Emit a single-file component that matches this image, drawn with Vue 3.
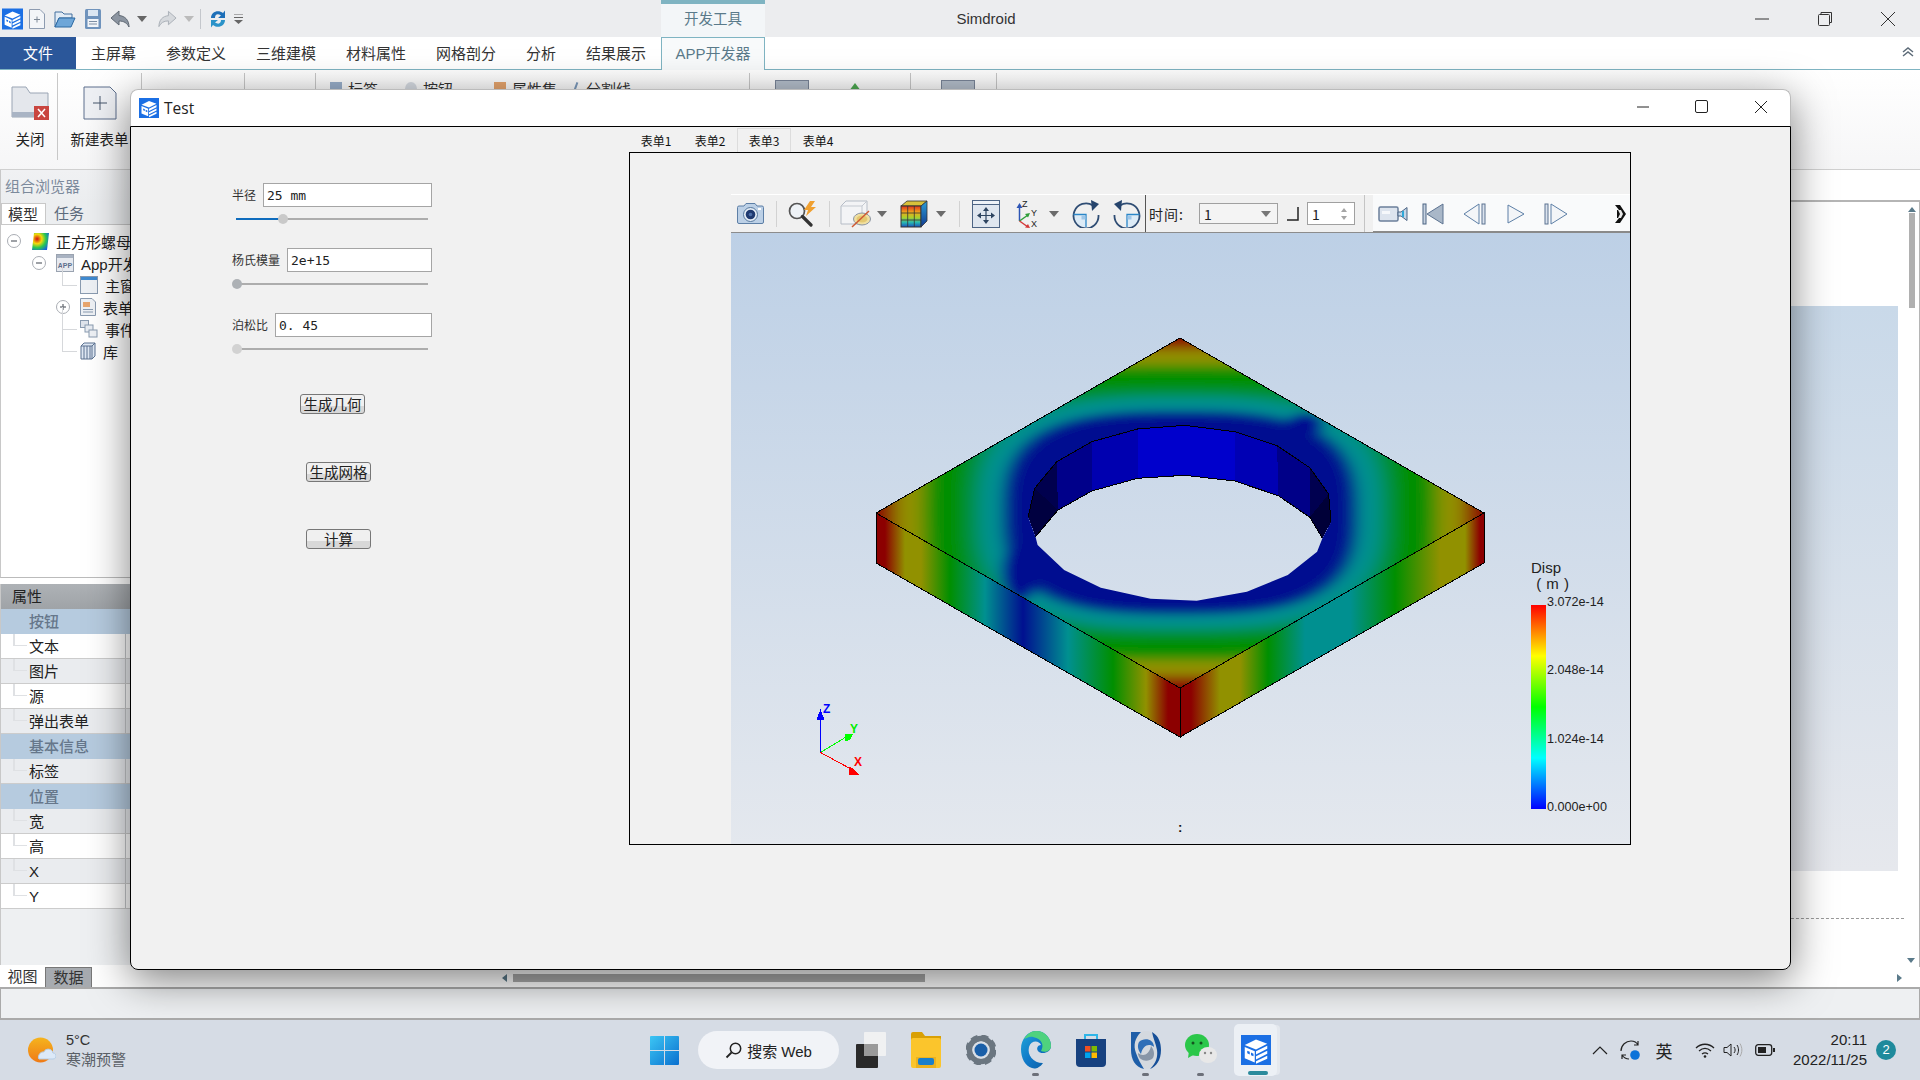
<template>
  <div class="desktop">
    <svg class="defs" width="0" height="0">
      <symbol id="logo" viewBox="0 0 24 24">
        <rect width="24" height="24" fill="#1b6fe4" />
        <path d="M3 8 12 3.500 21 7 12 11.500Z M3 9.500 11 13V22L3 18.500Z M12 13 21 8.500V11L12 15.500Z M12 17 21 12.500V15L12 19.500Z M12 21 21 16.500V19L12 23Z" fill="#fff" />
        <path d="M5 12.500 7 13.400V15.500L5 14.600Z M8 14 10 15V17L8 16.100Z" fill="#1b6fe4" />
      </symbol>
    </svg>

    <!-- title bar -->
    <div class="titlebar">
      <div class="qat">
        <svg class="q-logo" width="21" height="22"><use href="#logo" /></svg>
        <svg class="q-new" width="18" height="22" viewBox="0 0 18 22"><path d="M1.500 1.500H12L16.500 6V20.500H1.500Z" fill="#f3f5f8" stroke="#8d9bb0" /><path d="M9 8.500V14.500M6 11.500H12" stroke="#7d8896" /></svg>
        <svg class="q-open" width="22" height="20" viewBox="0 0 22 20"><path d="M1 3H8L10 5H18V9H5L1 18Z" fill="#e1ebf5" stroke="#44709f" /><path d="M5 9H21L17 18H1Z" fill="#6ea6d8" stroke="#2c6aa3" /></svg>
        <svg class="q-save" width="18" height="22" viewBox="0 0 18 22"><rect x="1" y="1" width="16" height="20" rx="1.500" fill="#6f93bc" /><rect x="4" y="2" width="10" height="6" fill="#dbe6f2" /><rect x="3.500" y="11" width="11" height="8" fill="#f1f4f8" /><path d="M5 13.500H13M5 16H13" stroke="#7c8ea4" /></svg>
        <svg class="q-undo" width="21" height="20" viewBox="0 0 21 20"><path d="M9 2 1 9 9 16V12C14 12 17 14 19 18 19 11 15 7 9 6.500Z" fill="#8c95a1" stroke="#5f6873" /></svg>
        <svg class="q-drop" width="10" height="6" viewBox="0 0 10 6"><path d="M0 0H10L5 6Z" fill="#666" /></svg>
        <svg class="q-redo" width="20" height="20" viewBox="0 0 21 20"><path d="M12 2 20 9 12 16V12C7 12 4 14 2 18 2 11 6 7 12 6.500Z" fill="#d6d9dd" stroke="#a9afb6" /></svg>
        <svg class="q-drop2" width="10" height="6" viewBox="0 0 10 6"><path d="M0 0H10L5 6Z" fill="#bbb" /></svg>
        <i class="q-sep"></i>
        <svg class="q-sync" width="18" height="22" viewBox="0 0 18 22"><path d="M2 10C2 4 9 1 14 5L16 2.500V10H9L12 7.500C8 5 6 7 6 10Z" fill="#1d6fb8" /><path d="M16 12C16 18 9 21 4 17L2 19.500V12H9L6 14.500C10 17 12 15 12 12Z" fill="#2b93c9" /></svg>
        <svg class="q-more" width="9" height="10" viewBox="0 0 9 10"><path d="M0 0H9M0 3.500H9" stroke="#666" /><path d="M0 6H9L4.500 10Z" fill="#666" /></svg>
      </div>
      <div class="context-tab">开发工具</div>
      <div class="app-title">Simdroid</div>
      <div class="win-ctrl">
        <svg width="16" height="16" viewBox="0 0 16 16"><path d="M1 8H15" stroke="#333" /></svg>
        <svg width="16" height="16" viewBox="0 0 16 16"><path d="M4 3V1.500H14.500V11.500H12.500" fill="none" stroke="#333" /><rect x="1.500" y="3.500" width="11" height="11" rx="1" fill="#ecedef" stroke="#333" /></svg>
        <svg width="16" height="16" viewBox="0 0 16 16"><path d="M1 1 15 15M15 1 1 15" stroke="#333" /></svg>
      </div>
    </div>

    <!-- ribbon tabs -->
    <div class="tabbar">
      <div class="file-tab">文件</div>
      <div v-for="t in ribbonTabs" :key="t" class="rb-tab">{{ t }}</div>
      <div class="rb-tab active">APP开发器</div>
      <svg class="rb-collapse" width="12" height="10" viewBox="0 0 12 10"><path d="M1 5 6 1 11 5M1 9 6 5 11 9" fill="none" stroke="#5d6b78" stroke-width="1.500" /></svg>
    </div>

    <!-- ribbon -->
    <div class="ribbon">
      <div class="rb-group g-close">
        <svg width="38" height="34" viewBox="0 0 38 34"><path d="M1 1H15L19 7H37V31H1Z" fill="#e4e7ec" stroke="#9aa5b4" /><rect x="1" y="26" width="36" height="5" fill="#a9b4c4" /><rect x="23" y="20" width="15" height="14" fill="#c9453f" /><path d="M27 23 34 31M34 23 27 31" stroke="#fff" stroke-width="1.500" /></svg>
        <span>关闭</span>
      </div>
      <div class="rb-group g-new">
        <svg width="34" height="34" viewBox="0 0 34 34"><path d="M1 1H27L33 7V33H1Z" fill="#eef0f4" stroke="#5d6f8d" /><path d="M17 10V24M10 17H24" stroke="#44546a" /></svg>
        <span>新建表单</span>
      </div>
      <div class="rb-group g-a"></div>
      <div class="rb-group g-b"></div>
      <div class="rb-group g-small">
        <span class="s-item si-1"><i class="s-icon c1"></i>标签</span>
        <span class="s-item si-2"><i class="s-icon c2"></i>按钮</span>
        <span class="s-item si-3"><i class="s-icon c3"></i>属性集</span>
        <span class="s-item si-4"><i class="s-icon c4"></i>分割线</span>
      </div>
      <div class="rb-group g-c"><i class="big-icon"></i><i class="green-icon"></i></div>
      <div class="rb-group g-d"><i class="big-icon"></i></div>
    </div>

    <!-- main area behind the dialog -->
    <div class="main">
      <div class="side">
        <div class="browser">
          <div class="browser-title">组合浏览器</div>
          <div class="browser-tabs">
            <span class="b-tab on">模型</span>
            <span class="b-tab">任务</span>
          </div>
          <div class="tree">
            <div v-for="r in treeRows" :key="r.label" class="tree-row" :class="r.branch" :style="{ paddingLeft: r.indent + 'px' }">
              <svg v-if="r.toggle" class="toggle" width="14" height="14" viewBox="0 0 14 14">
                <circle cx="7" cy="7" r="6.500" fill="#fff" stroke="#a9adb3" />
                <path d="M4 7H10" stroke="#6a6f76" stroke-width="1.300" />
                <path v-if="r.toggle === 'plus'" d="M7 4V10" stroke="#6a6f76" stroke-width="1.300" />
              </svg>
              <svg v-if="r.icon === 'nut'" width="18" height="18" viewBox="0 0 18 18">
                <defs><radialGradient id="nutfill" cx=".3" cy=".35" r=".8"><stop offset="0" stop-color="#d21010" /><stop offset=".35" stop-color="#f5d90a" /><stop offset=".65" stop-color="#28c850" /><stop offset="1" stop-color="#1560e0" /></radialGradient></defs>
                <path d="M3 1H18L16 18H1Z" fill="url(#nutfill)" />
              </svg>
              <svg v-if="r.icon === 'app'" width="18" height="18" viewBox="0 0 18 18"><rect x=".5" y=".5" width="17" height="17" fill="#e7eaf0" stroke="#9aa3b0" /><rect x="1" y="1" width="16" height="3" fill="#a9b3c2" /><text x="9" y="14" text-anchor="middle" class="app-txt">APP</text></svg>
              <svg v-if="r.icon === 'win'" width="18" height="18" viewBox="0 0 18 18"><rect x=".5" y=".5" width="17" height="17" fill="#eef1f5" stroke="#8a9bb0" /><rect x="1" y="1" width="16" height="3" fill="#3f8ad0" /></svg>
              <svg v-if="r.icon === 'form'" width="16" height="18" viewBox="0 0 16 18"><path d="M.5.5H12L15.500 4V17.500H.500Z" fill="#eef1f5" stroke="#8a9bb0" /><rect x="3" y="4" width="7" height="5" fill="#e8a66e" /><path d="M3 11.500H13M3 14H13" stroke="#8a9bb0" /></svg>
              <svg v-if="r.icon === 'event'" width="18" height="18" viewBox="0 0 18 18"><rect x=".5" y=".5" width="8" height="7" fill="#dfe4ec" stroke="#8a9bb0" /><rect x="5" y="5" width="8" height="7" fill="#e8ecf2" stroke="#8a9bb0" /><rect x="9" y="10" width="8" height="7" fill="#eef1f5" stroke="#8a9bb0" /></svg>
              <svg v-if="r.icon === 'lib'" width="16" height="18" viewBox="0 0 16 18"><path d="M1 4 4 1H15V14L12 17H1Z" fill="#dfe8f4" stroke="#5d7391" /><path d="M4 4V17M7 4V17M10 4V17M1 4H12V17M12 4 15 1" fill="none" stroke="#5d7391" /></svg>
              <span class="tree-label">{{ r.label }}</span>
            </div>
          </div>
        </div>
        <div class="props">
          <div class="props-head">属性</div>
          <div v-for="p in propRows" :key="p.label" class="prop-row" :class="p.kind">
            <span>{{ p.label }}</span>
          </div>
        </div>
      </div>
      <div class="canvas">
        <div class="doc">
          <div class="plot"></div>
          <div class="dash"></div>
        </div>
        <div class="v-scroll">
          <i class="arrow-up"></i>
          <i class="v-thumb"></i>
          <i class="arrow-down"></i>
        </div>
      </div>
    </div>

    <div class="bottom-tabs">
      <span class="bt">视图</span>
      <span class="bt off">数据</span>
      <div class="h-scroll">
        <i class="arrow-left"></i>
        <i class="h-thumb"></i>
        <i class="arrow-right"></i>
      </div>
    </div>
    <div class="statusbar"></div>

    <!-- windows taskbar -->
    <div class="taskbar">
      <div class="weather">
        <svg width="28" height="26" viewBox="0 0 28 26">
          <defs><linearGradient id="sun" x1="0" y1="0" x2="0" y2="1"><stop offset="0" stop-color="#f5b41e" /><stop offset="1" stop-color="#ef7a16" /></linearGradient></defs>
          <circle cx="12.500" cy="13" r="12.500" fill="url(#sun)" />
          <path d="M11 22H25C29 22 29 16 25 16 24 11 17 11 16 15 12 14 9 20 11 22Z" fill="#dce9f8" stroke="#b6cde6" />
        </svg>
        <div class="w-text"><div>5°C</div><div class="w-sub">寒潮预警</div></div>
      </div>
      <svg class="start" width="29" height="29" viewBox="0 0 29 29">
        <defs><linearGradient id="winb" x1="0" y1="0" x2="1" y2="1"><stop offset="0" stop-color="#3cc6f4" /><stop offset="1" stop-color="#0a70cf" /></linearGradient></defs>
        <path d="M0 1Q0 0 1 0H14V14H0ZM15 0H28Q29 0 29 1V14H15ZM0 15H14V29H1Q0 29 0 28ZM15 15H29V28Q29 29 28 29H15Z" fill="url(#winb)" />
      </svg>
      <div class="search">
        <svg width="17" height="17" viewBox="0 0 17 17"><circle cx="10.500" cy="6.500" r="5.200" fill="none" stroke="#222" stroke-width="1.500" /><path d="M6.500 10.500 1.500 15.500" stroke="#222" stroke-width="1.800" /></svg>
        <span>搜索 Web</span>
      </div>
      <div class="apps">
        <div class="app">
          <svg width="30" height="36" viewBox="0 0 30 36"><rect x="0" y="12" width="22" height="24" rx="1" fill="#2a2a2a" /><rect x="8" y="0" width="22" height="24" rx="1" fill="#f4f4f4" opacity=".85" /><rect x="8" y="12" width="14" height="12" fill="#9a9a9a" /></svg>
        </div>
        <div class="app">
          <svg width="30" height="36" viewBox="0 0 30 36"><path d="M0 2Q0 0 2 0H11L14 4H30V8H0Z" fill="#d9a005" /><rect y="6" width="30" height="30" rx="2" fill="#fbc52c" /><rect x="5" y="25" width="20" height="11" fill="#ecb21f" /><rect x="7" y="26" width="16" height="7" rx="2" fill="#1a7fcb" /></svg>
        </div>
        <div class="app">
          <svg width="30" height="30" viewBox="0 0 30 30"><circle cx="15" cy="15" r="11.500" fill="none" stroke="#6b7680" stroke-width="5.500" /><circle cx="15" cy="15" r="14" fill="none" stroke="#6b7680" stroke-width="3" stroke-dasharray="7 4" /><circle cx="15" cy="15" r="6.500" fill="#1a5fa8" /><circle cx="15" cy="15" r="8" fill="none" stroke="#dde2e8" stroke-width="1" /></svg>
        </div>
        <div class="app dot">
          <svg width="30" height="38" viewBox="0 0 30 38">
            <defs><linearGradient id="edge" x1="0" y1="0" x2="1" y2="1"><stop offset="0" stop-color="#22a7d8" /><stop offset=".5" stop-color="#1079c8" /><stop offset="1" stop-color="#0c5aa0" /></linearGradient></defs>
            <path d="M15 0C25 0 30 8 30 15 30 22 20 24 17 20 15 17 17 14 20 14 18 9 10 9 8 16 6 24 12 32 22 32 18 38 13 38 11 37 4 35 0 27 0 18 0 8 7 0 15 0Z" fill="url(#edge)" />
            <path d="M15 0C25 0 30 8 30 15 30 20 24 22 20 20 23 15 22 8 12 6 8 5 5 8 3 8 6 3 10 0 15 0Z" fill="#4fd27e" />
          </svg>
        </div>
        <div class="app">
          <svg width="30" height="34" viewBox="0 0 30 34"><path d="M9 6V2H21V6" fill="none" stroke="#2fb5e8" stroke-width="2" /><path d="M0 6H30V30Q30 34 26 34H4Q0 34 0 30Z" fill="#17417f" /><rect x="9" y="13" width="5.500" height="5.500" fill="#f05022" /><rect x="15.500" y="13" width="5.500" height="5.500" fill="#7fba00" /><rect x="9" y="19.500" width="5.500" height="5.500" fill="#00a4ef" /><rect x="15.500" y="19.500" width="5.500" height="5.500" fill="#ffb900" /></svg>
        </div>
        <div class="app dot">
          <svg width="30" height="40" viewBox="0 0 30 40">
            <ellipse cx="15" cy="20" rx="15" ry="19" fill="#d4d9df" />
            <path d="M0 2H10C4 8 2 15 5 23 7 29 10 34 13 39 4 37 0 29 0 20Z" fill="#1e5ea8" />
            <path d="M21 2C28 6 30 13 30 20 30 30 25 37 19 39 25 33 27 27 26 20 25 14 22 8 21 2Z" fill="#164f98" />
            <path d="M8 12C13 7 23 9 23 17 18 13 12 15 10 24 7 20 6 16 8 12Z" fill="#2f6fb8" />
            <path d="M22 28C17 33 7 31 7 23 12 27 18 25 20 16 23 20 24 24 22 28Z" fill="#8896a8" />
          </svg>
        </div>
        <div class="app dot">
          <svg width="32" height="34" viewBox="0 0 32 34"><ellipse cx="12" cy="12" rx="12" ry="11" fill="#2bc74a" /><path d="M4 18 3 25 10 21Z" fill="#2bc74a" /><circle cx="8" cy="10" r="1.500" fill="#14531f" /><circle cx="16" cy="10" r="1.500" fill="#14531f" /><ellipse cx="23" cy="22" rx="9" ry="8" fill="#e8e8e8" /><circle cx="20" cy="20" r="1.200" fill="#888" /><circle cx="26" cy="20" r="1.200" fill="#888" /></svg>
        </div>
        <div class="app active">
          <svg width="30" height="40"><use href="#logo" /></svg>
        </div>
      </div>
      <div class="tray">
        <svg class="t30" width="16" height="9" viewBox="0 0 16 9"><path d="M1 8 8 1 15 8" fill="none" stroke="#222" stroke-width="1.200" /></svg>
        <svg class="t30" width="20" height="20" viewBox="0 0 20 20"><path d="M1 11C1 5 6 1 11 1 14 1 17 3 18 5M18 1V5H14M2 19V15H6M2 15C4 18 6 19 9 19" fill="none" stroke="#222" stroke-width="1.200" /><circle cx="15" cy="15" r="4.800" fill="#0b73d9" /></svg>
        <span class="ime">英</span>
        <svg class="wifi" width="20" height="15" viewBox="0 0 20 15"><path d="M1 5C6 0 14 0 19 5M4 8C8 4.500 12 4.500 16 8M7 11C9 9.500 11 9.500 13 11" fill="none" stroke="#222" stroke-width="1.300" /><circle cx="10" cy="13.500" r="1.300" fill="#222" /></svg>
        <svg class="vol" width="20" height="16" viewBox="0 0 20 16"><path d="M1 5.500H4L8 2V14L4 10.500H1Z" fill="none" stroke="#222" /><path d="M11 5C12.500 7 12.500 9 11 11M14 3C16 6 16 10 14 13" fill="none" stroke="#222" /><path d="M17 1.500C19.500 6 19.500 10 17 14.500" fill="none" stroke="#aaa" /></svg>
        <svg class="bat" width="20" height="12" viewBox="0 0 20 12"><rect x=".7" y=".7" width="16" height="10.600" rx="2.500" fill="none" stroke="#222" stroke-width="1.300" /><rect x="3" y="3" width="8" height="6" fill="#222" /><rect x="18" y="4" width="2" height="4" fill="#222" /></svg>
        <div class="clock"><div>20:11</div><div>2022/11/25</div></div>
        <span class="badge">2</span>
      </div>
    </div>

    <!-- the Test dialog, floating over the app -->
    <div class="dialog">
      <div class="dlg-title">
        <svg width="20" height="20"><use href="#logo" /></svg>
        <span class="dlg-name">Test</span>
        <div class="dlg-ctrl">
          <svg width="14" height="14" viewBox="0 0 14 14"><path d="M1 7H13" stroke="#222" /></svg>
          <svg width="14" height="14" viewBox="0 0 14 14"><rect x=".5" y=".5" width="12" height="12" rx="1.500" fill="none" stroke="#222" /></svg>
          <svg width="14" height="14" viewBox="0 0 14 14"><path d="M1 1 13 13M13 1 1 13" stroke="#222" /></svg>
        </div>
      </div>
      <div class="dlg-body">
        <div class="form">
          <div v-for="f in fields" :key="f.label" class="field">
            <div class="field-row">
              <label>{{ f.label }}</label>
              <input class="field-input" :value="f.value" readonly />
            </div>
            <div class="slider">
              <div class="s-track"></div>
              <div class="s-fill" :style="{ width: f.pct + '%' }"></div>
              <div class="s-handle" :style="{ left: f.pct + '%', background: f.knob }"></div>
            </div>
          </div>
          <button class="f-btn b1">生成几何</button>
          <button class="f-btn b2">生成网格</button>
          <button class="f-btn b3">计算</button>
        </div>
        <div class="stage">
          <div class="form-tabs">
            <span v-for="t in formTabs" :key="t" class="f-tab" :class="{ sel: t === '表单3' }">{{ t }}</span>
          </div>
          <div class="frame">
            <div class="toolbar">
              <svg width="29" height="23" viewBox="0 0 29 23">
                <path d="M1.500 5.500Q1.500 4 3 4H8L10 1.500H19L21 4H26Q27.500 4 27.500 5.500V20Q27.500 21.500 26 21.500H3Q1.500 21.500 1.500 20Z" fill="#bcd0e6" stroke="#5d7fa6" />
                <circle cx="14.500" cy="12.500" r="7" fill="#e6eef6" stroke="#56789e" />
                <circle cx="14.500" cy="12.500" r="4.800" fill="#1f3a70" />
                <circle cx="14.500" cy="12.500" r="1.800" fill="#4d6fa8" />
                <rect x="22" y="6" width="3" height="2" fill="#fff" />
              </svg>
              <i class="sep"></i>
              <svg width="30" height="26" viewBox="0 0 30 26">
                <circle cx="10" cy="10" r="7.500" fill="#eef2f6" stroke="#555" stroke-width="1.700" />
                <path d="M15.500 15.500 24 24" stroke="#333" stroke-width="3.200" stroke-linecap="round" />
                <path d="M23 0 17 9H21L19 15 29 6H24L28 0Z" fill="#f0a030" />
              </svg>
              <i class="sep"></i>
              <svg width="32" height="28" viewBox="0 0 32 28">
                <path d="M1 6 6 1H27V19L22 24H1Z" fill="#f3f4f6" stroke="#b5bcc6" />
                <path d="M1 6H22V24M22 6 27 1" fill="none" stroke="#c4c9d0" />
                <ellipse cx="22" cy="19" rx="8.500" ry="6" fill="#f0dfa0" stroke="#8a94a3" />
                <ellipse cx="22" cy="19" rx="5.500" ry="3.500" fill="#e4c870" />
                <path d="M12 27 29 11" stroke="#cf5a34" stroke-width="1.500" />
              </svg>
              <svg class="tri" width="10" height="6" viewBox="0 0 10 6"><path d="M0 0H10L5 6Z" fill="#6b6b6b" /></svg>
              <svg class="color-cube" width="28" height="28" viewBox="0 0 28 28">
                <defs>
                  <linearGradient id="cubeFront" x1="0" y1="0" x2="0" y2="1"><stop offset="0" stop-color="#e0301c" /><stop offset=".3" stop-color="#f0a81c" /><stop offset=".55" stop-color="#a8d02c" /><stop offset=".78" stop-color="#28b8b0" /><stop offset="1" stop-color="#1a50c0" /></linearGradient>
                  <linearGradient id="cubeSide" x1="0" y1="0" x2="0" y2="1"><stop offset="0" stop-color="#2aa0d8" /><stop offset="1" stop-color="#123a90" /></linearGradient>
                </defs>
                <path d="M1 6 7 1H27L21 6Z" fill="#d8c03a" stroke="#333" stroke-width=".8" />
                <rect x="1" y="6" width="20" height="21" fill="url(#cubeFront)" stroke="#333" />
                <path d="M21 6 27 1V21L21 27Z" fill="url(#cubeSide)" stroke="#333" stroke-width=".8" />
                <path d="M7.700 6V27M14.300 6V27M1 13H21M1 20H21" stroke="#333" stroke-width=".8" />
              </svg>
              <svg class="tri" width="10" height="6" viewBox="0 0 10 6"><path d="M0 0H10L5 6Z" fill="#6b6b6b" /></svg>
              <i class="sep"></i>
              <svg width="28" height="28" viewBox="0 0 28 28">
                <rect x=".5" y=".5" width="27" height="27" fill="#dfe6ef" stroke="#4d6484" />
                <rect x="1" y="1" width="26" height="3" fill="#eef2f7" />
                <path d="M.5 4.500H27.500" stroke="#4d6484" />
                <path d="M14 10V21M8 15.500H20" stroke="#2d4460" stroke-width="1.200" />
                <path d="M14 7 11 11H17ZM14 24 11 20H17ZM5 15.500 9 12.500V18.500ZM23 15.500 19 12.500V18.500Z" fill="#2d4460" />
              </svg>
              <svg class="axes" width="24" height="28" viewBox="0 0 24 28">
                <path d="M3.500 21V6" stroke="#2d55b5" stroke-width="1.500" />
                <path d="M3.500 3 .5 8H6.500Z" fill="#2d55b5" />
                <path d="M3.500 21 12 15" stroke="#2f9e3a" stroke-width="1.500" />
                <path d="M14 13 9 14 12 17.500Z" fill="#2f9e3a" />
                <path d="M3.500 21 12 27" stroke="#d43a3a" stroke-width="1.500" />
                <path d="M14 28 9 27.500 12 24Z" fill="#d43a3a" />
                <text x="6" y="7" class="ax">Z</text>
                <text x="15" y="16" class="ax">Y</text>
                <text x="15" y="27" class="ax">X</text>
              </svg>
              <svg class="tri" width="10" height="6" viewBox="0 0 10 6"><path d="M0 0H10L5 6Z" fill="#6b6b6b" /></svg>
              <svg width="28" height="28" viewBox="0 0 28 28">
                <path d="M14 15.500H2A12.500 12.500 0 0 0 14 27.500V15.500Z" fill="#dcebf7" />
                <path d="M21 5.500A12.500 12.500 0 1 0 26.500 15" fill="none" stroke="#2f4d74" stroke-width="1.800" />
                <path d="M1.500 14.500H14V27" fill="none" stroke="#2a86c8" stroke-width="1.300" />
                <rect x="9.500" y="15.500" width="4" height="4" fill="#9ec6e8" />
                <path d="M19 0 27 4 20 11Z" fill="#26446c" />
              </svg>
              <svg width="28" height="28" viewBox="0 0 28 28">
                <path d="M14 15.500H26A12.500 12.500 0 0 1 14 27.500V15.500Z" fill="#dcebf7" />
                <path d="M7 5.500A12.500 12.500 0 1 1 1.500 15" fill="none" stroke="#2f4d74" stroke-width="1.800" />
                <path d="M26.500 14.500H14V27" fill="none" stroke="#2a86c8" stroke-width="1.300" />
                <rect x="14.500" y="15.500" width="4" height="4" fill="#9ec6e8" />
                <path d="M9 0 1 4 8 11Z" fill="#26446c" />
              </svg>
              <i class="sep tall dark"></i>
              <span class="time-label">时间:</span>
              <div class="combo"><span>1</span><svg width="10" height="6" viewBox="0 0 10 6"><path d="M0 0H10L5 6Z" fill="#777" /></svg></div>
              <svg class="step" width="12" height="14" viewBox="0 0 12 14"><path d="M11 0V13H0" fill="none" stroke="#222" stroke-width="1.500" /></svg>
              <div class="spin"><span>1</span><svg width="8" height="14" viewBox="0 0 8 14"><path d="M4 1 7 5H1ZM4 13 1 9H7Z" fill="#a5a5a5" /></svg></div>
              <i class="sep tall"></i>
              <svg width="30" height="16" viewBox="0 0 30 16">
                <rect x="1" y="1" width="19" height="14" rx="1.500" fill="#dde4ee" stroke="#6b7f9b" stroke-width="1.500" />
                <rect x="4" y="5" width="8" height="3" fill="#f6f8fb" />
                <path d="M20 6 23 6 29 1.500V14.500L23 10H20Z" fill="#c4d6e8" stroke="#4d6484" />
                <rect x="24" y="5" width="2" height="6" fill="#2fa8d8" />
              </svg>
              <svg width="22" height="22" viewBox="0 0 22 22">
                <rect x="1" y="1" width="3" height="20" fill="#c7d2e0" stroke="#4d6484" />
                <path d="M21 1V21L5 11Z" fill="#a9b7c8" stroke="#5d7391" />
              </svg>
              <svg width="24" height="22" viewBox="0 0 24 22">
                <path d="M16 1V21L1 11Z" fill="#f3f5f8" stroke="#5d7fa6" />
                <rect x="19" y="1" width="3" height="20" fill="#dbe3ee" stroke="#5d7391" />
              </svg>
              <svg width="18" height="20" viewBox="0 0 18 20"><path d="M1 1V19L17 10Z" fill="#f3f5f8" stroke="#5d7fa6" /></svg>
              <svg width="24" height="22" viewBox="0 0 24 22">
                <rect x="1" y="1" width="3" height="20" fill="#dbe3ee" stroke="#5d7391" />
                <path d="M7 1V21L23 11Z" fill="#f3f5f8" stroke="#5d7fa6" />
              </svg>
              <span></span>
              <svg width="12" height="18" viewBox="0 0 12 18"><path d="M0 0H5L11 9 5 18H0L4 13H2V5H4Z" fill="#111" /><path d="M3 5H6L8 9 6 13H3L5 9Z" fill="#e8e8e8" /></svg>
            </div>
            <div class="viewport">
              <svg class="scene" width="899" height="611" viewBox="731 233 899 611">
                <defs>
                  <clipPath id="topClip"><path :d="topPath" clip-rule="evenodd" /></clipPath>
                  <filter id="soft" filterUnits="userSpaceOnUse" x="731" y="233" width="899" height="611"><feGaussianBlur stdDeviation="7 4" /></filter>
                  <linearGradient id="leftFace" gradientUnits="userSpaceOnUse" x1="876" y1="0" x2="1180" y2="0">
                    <stop v-for="s in leftStops" :key="s[0]" :offset="(s[0] - 876) / 304" :stop-color="s[1]" />
                  </linearGradient>
                  <linearGradient id="rightFace" gradientUnits="userSpaceOnUse" x1="1180" y1="0" x2="1484" y2="0">
                    <stop v-for="s in rightStops" :key="s[0]" :offset="(s[0] - 1180) / 304" :stop-color="s[1]" />
                  </linearGradient>
                </defs>
                <g clip-path="url(#topClip)">
                  <g filter="url(#soft)">
                    <polygon v-for="b in bands" :key="b.r" :points="b.points" :fill="b.fill" />
                    <ellipse cx="1020" cy="572" rx="18" ry="30" fill="#001090" />
                    <ellipse cx="1305" cy="425" rx="18" ry="12" fill="#001090" />
                  </g>
                </g>
                <g stroke="#000" stroke-width="1" shape-rendering="crispEdges">
                  <polygon v-for="w in walls" :key="w.fill + w.points" :points="w.points" :fill="w.fill" stroke="none" />
                  <polygon points="876,513 1180,688 1180,737 876,563" fill="url(#leftFace)" />
                  <polygon points="1484,513 1180,688 1180,737 1484,563" fill="url(#rightFace)" />
                  <polygon points="1180,338 1484,513 1180,688 876,513" fill="none" />
                  <polyline :points="rimLine" fill="none" />
                  <polyline :points="innerLine" fill="none" />
                </g>
                <g shape-rendering="crispEdges">
                  <path d="M820.500 752.500V716" stroke="#00f" stroke-width="1.500" />
                  <path d="M820.500 709 816.500 720H824.500Z" fill="#00f" />
                  <path d="M820.500 752.500 846 737" stroke="#0f0" stroke-width="1" />
                  <path d="M845 734H853L850 740 845 741Z" fill="#0f0" />
                  <path d="M820.500 752.500 851 769" stroke="#f00" stroke-width="1" />
                  <path d="M849 767 853 768 859 775H849Z" fill="#f00" />
                </g>
                <text x="823" y="713" class="tri-z">Z</text>
                <text x="850" y="733" class="tri-y">Y</text>
                <text x="854" y="766" class="tri-x">X</text>
              </svg>
              <div class="legend">
                <div class="lg-title">Disp<br />&nbsp;( m )</div>
                <div class="lg-body">
                  <div class="lg-bar"></div>
                  <div class="lg-vals">
                    <span v-for="v in legendVals" :key="v">{{ v }}</span>
                  </div>
                </div>
              </div>
              <div class="v-colon">:</div>
            </div>
          </div>
        </div>
      </div>
    </div>
  </div>
</template>

<script setup>
const ribbonTabs = ['主屏幕', '参数定义', '三维建模', '材料属性', '网格剖分', '分析', '结果展示']

const treeRows = [
  { label: '正方形螺母', indent: 6, toggle: 'minus', icon: 'nut' },
  { label: 'App开发器', indent: 31, toggle: 'minus', icon: 'app' },
  { label: '主窗体', indent: 79, icon: 'win', branch: 'branch' },
  { label: '表单', indent: 55, toggle: 'plus', icon: 'form' },
  { label: '事件', indent: 79, icon: 'event', branch: 'branch' },
  { label: '库', indent: 79, icon: 'lib', branch: 'branch end' }
]

const propRows = [
  { label: '按钮', kind: 'head' },
  { label: '文本', kind: 'light' },
  { label: '图片', kind: 'dark' },
  { label: '源', kind: 'light' },
  { label: '弹出表单', kind: 'dark' },
  { label: '基本信息', kind: 'head' },
  { label: '标签', kind: 'dark' },
  { label: '位置', kind: 'head' },
  { label: '宽', kind: 'dark' },
  { label: '高', kind: 'light' },
  { label: 'X', kind: 'dark' },
  { label: 'Y', kind: 'light last' }
]

const fields = [
  { label: '半径', value: '25 mm', pct: 24.5, knob: '#c9c9c9' },
  { label: '杨氏模量', value: '2e+15', pct: 0.5, knob: '#adb1b5' },
  { label: '泊松比', value: '0. 45', pct: 0.5, knob: '#d2d2d2' }
]

const formTabs = ['表单1', '表单2', '表单3', '表单4']
const legendVals = ['3.072e-14', '2.048e-14', '1.024e-14', '0.000e+00']

const red = '#8c0000'
const olive = '#919100'
const green = '#008f00'
const teal = '#009090'
const navy = '#001090'

const leftStops = [[876, red], [885, red], [905, olive], [921, olive], [950, green], [985, teal], [1023, navy], [1068, teal], [1113, green], [1146, olive], [1168, red], [1180, red]]
const rightStops = [[1180, red], [1191, red], [1220, olive], [1240, olive], [1268, green], [1305, teal], [1350, teal], [1395, green], [1440, olive], [1465, olive], [1480, red], [1484, red]]

// colour of the top face by contour level
const ramp = [[92, 0x00, 0x0a, 0x90], [99, 0x00, 0x25, 0x8f], [105, 0x00, 0x90, 0x90], [112, 0x00, 0x90, 0x90], [130, 0x00, 0x8f, 0x00], [140, 0x00, 0x8f, 0x00], [152, 0x91, 0x91, 0x00], [160, 0x91, 0x91, 0x00], [172, 0x8c, 0x0a, 0x00], [180, 0x8c, 0x00, 0x00]]

const rampColor = (r) => {
  if (r <= ramp[0][0]) return 'rgb(0,10,144)'
  const i = ramp.findIndex((s) => s[0] >= r)
  if (i < 0) return 'rgb(140,0,0)'
  const a = ramp[i - 1]
  const b = ramp[i]
  const t = (r - a[0]) / (b[0] - a[0])
  const mix = (k) => Math.round(a[k] + (b[k] - a[k]) * t)
  return `rgb(${mix(1)},${mix(2)},${mix(3)})`
}

// the bands run as rounded squares round the hole, seen in isometric view
const contour = (r) => {
  const t = Math.min(Math.max((r - 112) / 18, 0), 1)
  const p = 2.9 + 0.4 * t
  const e = 2 / p
  const out = []
  for (let deg = 0; deg < 360; deg += 4) {
    const c = Math.cos((deg * Math.PI) / 180)
    const s = Math.sin((deg * Math.PI) / 180)
    const dx = Math.sign(c) * Math.abs(c) ** e * r * 1.74
    const dy = Math.sign(s) * Math.abs(s) ** e * r
    out.push(`${(1180 + dx).toFixed(1)},${(512.7 + dy).toFixed(1)}`)
  }
  return out.join(' ')
}

const bands = []
for (let r = 210; r >= 60; r -= 1) {
  bands.push({ r, points: contour(r), fill: rampColor(r) })
}

// measured on the enlarged crop, so map back to page pixels
const pt = ([x, y]) => `${(860 + x / 2.45).toFixed(1)},${(320 + y / 3).toFixed(1)}`
const toPts = (list) => list.map(pt).join(' ')

const rimTop = [[430, 650], [412, 590], [428, 505], [482, 425], [568, 365], [680, 327], [795, 316], [918, 335], [1022, 377], [1102, 443], [1148, 522], [1154, 605], [1133, 655]]
const rimLow = [[430, 650], [430, 650], [485, 570], [485, 570], [568, 513], [680, 475], [795, 466], [918, 483], [1025, 527], [1102, 592], [1102, 592], [1133, 655], [1133, 655]]
const rimFront = [[1133, 655], [1120, 695], [1048, 765], [948, 815], [825, 842], [712, 836], [590, 803], [500, 750], [435, 675], [430, 650]]

const wallFills = ['#00002c', '#000040', '#00004e', '#00008a', '#0000b0', '#0000cc', '#0000cc', '#0000b4', '#000088', '#000050', '#000038', '#000030']
const walls = wallFills.map((fill, i) => ({
  fill,
  points: toPts([rimTop[i], rimTop[i + 1], rimLow[i + 1], rimLow[i]])
}))

const diamond = 'M1180 338L1484 513L1180 688L876 513Z'
const holeEdge = [...rimTop, ...rimFront]
const topPath = `${diamond}M${holeEdge.map(pt).join('L')}Z`
const rimLine = toPts(rimTop.slice(1, 12))
const innerLine = toPts([[430, 650], [485, 570], [568, 513], [680, 475], [795, 466], [918, 483], [1025, 527], [1102, 592], [1133, 655]])
</script>

<style>
html, body {
  margin: 0;
  overflow: hidden;
}
</style>

<style scoped>
.desktop {
  position: relative;
  width: 1920px;
  height: 1080px;
  overflow: hidden;
  display: flex;
  flex-direction: column;
  background: #fff;
  color: #222;
  font-family: "Liberation Sans", "Noto Sans CJK SC", sans-serif;
  font-size: 15px;
}
.defs {
  position: absolute;
}

.titlebar {
  height: 37px;
  flex: none;
  display: flex;
  background: #ecedef;
}
.qat {
  width: 661px;
  display: flex;
  align-items: center;
  padding-left: 2px;
  box-sizing: border-box;
}
.q-new { margin-left: 5px; }
.q-open { margin-left: 8px; }
.q-save { margin-left: 8px; }
.q-undo { margin-left: 8px; }
.q-drop { margin-left: 6px; }
.q-redo { margin-left: 10px; }
.q-drop2 { margin-left: 7px; }
.q-sep { width: 1px; height: 20px; background: #c4c7cc; margin-left: 6px; }
.q-sync { margin-left: 8px; }
.q-more { margin-left: 7px; }
.context-tab {
  width: 104px;
  box-sizing: border-box;
  border-top: 4px solid #7fb4c2;
  background: #f3f6f8;
  color: #5a7a8a;
  font-size: 14.5px;
  text-align: center;
  line-height: 30px;
}
.app-title {
  width: 442px;
  text-align: center;
  line-height: 37px;
  font-size: 15px;
  color: #333;
}
.win-ctrl {
  margin-left: auto;
  width: 189px;
  padding-right: 1px;
  display: flex;
  justify-content: space-around;
  align-items: center;
}

.tabbar {
  position: relative;
  height: 33px;
  flex: none;
  display: flex;
  background: #fff;
  border-bottom: 1px solid #7fb4c2;
  box-sizing: border-box;
  line-height: 33px;
}
.file-tab {
  width: 76px;
  background: #2b579a;
  color: #fff;
  text-align: center;
}
.rb-tab {
  padding: 0 15px;
  color: #333;
}
.rb-tab.active {
  width: 104px;
  padding: 0;
  box-sizing: border-box;
  height: 33px;
  text-align: center;
  color: #5a7a8a;
  border: 1px solid #7fb4c2;
  border-bottom: none;
  background: #f8fafb;
  margin-bottom: -1px;
  line-height: 31px;
}
.rb-collapse {
  margin: 10px 6px 0 auto;
}

.ribbon {
  height: 100px;
  flex: none;
  display: flex;
  box-sizing: border-box;
  background: linear-gradient(#fff, #f6f6f7);
  border-bottom: 1px solid #d0d0d0;
}
.rb-group {
  box-sizing: border-box;
  border-right: 1px solid #c8c8c8;
  margin: 3px 0 9px;
  display: flex;
  flex-direction: column;
  align-items: center;
  font-size: 14.5px;
}
.g-close { width: 58px; padding: 13px 0 0 3px; gap: 8px; }
.g-new { width: 84px; padding-top: 13px; gap: 8px; }
.g-a { width: 103px; }
.g-b { width: 71px; }
.g-small {
  width: 434px;
  flex-direction: row;
  align-items: flex-start;
  padding-top: 5px;
}
.s-item { display: flex; align-items: center; color: #333; font-size: 15px; }
.s-icon { width: 12px; height: 14px; display: block; margin-right: 6px; }
.si-1 { margin-left: 14px; }
.si-2 { margin-left: 27px; }
.si-3 { margin-left: 41px; }
.si-4 { margin-left: 17px; }
.c1 { background: #9ab0cc; }
.c2 { background: #d8dde4; border-radius: 50%; }
.c3 { background: #e8a66e; }
.c4 { width: 2px; background: #7d9bbd; transform: rotate(20deg); margin-right: 10px; }
.g-c { width: 161px; flex-direction: row; align-items: flex-start; padding: 7px 0 0 25px; }
.g-d { width: 86px; align-items: flex-start; padding: 7px 0 0 30px; }
.big-icon { width: 32px; height: 20px; background: #b6c0cd; border: 1px solid #7a8699; display: block; }
.green-icon { width: 0; height: 0; border: 6px solid transparent; border-bottom: 8px solid #4eaa52; border-top: none; display: block; margin: 3px 0 0 40px; }

.main {
  flex: none;
  height: 797px;
  display: flex;
  background: #fff;
}
.side {
  width: 135px;
  flex: none;
  display: flex;
  flex-direction: column;
  overflow: hidden;
}
.browser {
  height: 408px;
  box-sizing: border-box;
  background: #fff;
  border-bottom: 1px solid #bbb;
  border-left: 1px solid #c8c8c8;
}
.browser-title {
  height: 33px;
  line-height: 33px;
  padding-left: 4px;
  background: linear-gradient(#f0f1f3, #eceef0);
  color: #7c8a9c;
}
.browser-tabs {
  height: 21px;
  display: flex;
  background: #eceef0;
  border-bottom: 1px solid #c8c8c8;
  box-sizing: content-box;
}
.b-tab {
  padding: 0 7px;
  line-height: 21px;
  color: #5d6b7c;
  white-space: nowrap;
}
.b-tab.on {
  background: #fff;
  border: 1px solid #c8c8c8;
  border-bottom: none;
  color: #333;
  padding: 0 7px 0 6px;
  margin-right: 1px;
}
.tree {
  padding-top: 5px;
}
.tree-row {
  position: relative;
  height: 22px;
  display: flex;
  align-items: center;
  gap: 10px;
  white-space: nowrap;
}
.tree-row svg { flex: none; }
.tree-row.branch::before {
  content: "";
  position: absolute;
  left: 61px;
  top: -11px;
  bottom: 10px;
  width: 14px;
  border-left: 1px solid #d6d8db;
  border-bottom: 1px solid #d6d8db;
}
.tree-row.branch.end::before { top: -22px; }
.tree-label { font-size: 15px; margin-left: -3px; }
.app-txt { font: 700 7px "Liberation Sans", sans-serif; fill: #5d6f8d; }

.props {
  margin-top: 6px;
  height: 381px;
  background: #eef0f2;
  border-left: 1px solid #c8c8c8;
  box-sizing: border-box;
}
.props-head {
  height: 25px;
  line-height: 25px;
  padding-left: 11px;
  background: linear-gradient(#aeb2b6, #9fa3a7);
  color: #222;
}
.prop-row {
  height: 25px;
  line-height: 25px;
  padding-left: 28px;
  position: relative;
  box-sizing: border-box;
  white-space: nowrap;
}
.prop-row.head {
  background: #b6cbdf;
  color: #66778b;
  font-weight: 500;
}
.prop-row.light { background: #fff; border-bottom: 1px solid #ccc; }
.prop-row.dark { background: #eaecef; border-bottom: 1px solid #ccc; }
.prop-row:not(.head)::before {
  content: "";
  position: absolute;
  left: 12px;
  top: 0;
  bottom: 12px;
  width: 12px;
  border-left: 2px solid #dfe1e4;
  border-bottom: 1px solid #dfe1e4;
}
.prop-row:not(.head)::after {
  content: "";
  position: absolute;
  left: 124px;
  top: 0;
  bottom: 0;
  width: 1px;
  background: #c4c6c9;
}

.canvas {
  flex: 1;
  display: flex;
  padding-top: 30px;
  box-sizing: border-box;
}
.doc {
  flex: 1;
  border-top: 2px solid #b5b5b5;
  box-sizing: border-box;
}
.plot {
  margin: 104px 6px 0 0;
  height: 565px;
  background: linear-gradient(#c9d9e9, #e6e8ed);
}
.dash {
  margin-top: 47px;
  border-top: 1px dashed #999;
}
.v-scroll {
  width: 16px;
  flex: none;
  border-top: 2px solid #b5b5b5;
  border-right: 1px solid #b5b5b5;
  position: relative;
  box-sizing: border-box;
}
.arrow-up { display: block; margin: 5px 0 0 4px; width: 0; border: 4px solid transparent; border-bottom: 5px solid #5a7a8a; border-top: none; }
.v-thumb { display: block; margin: 1px 0 0 5px; width: 6px; height: 95px; background: #b0b0b0; }
.arrow-down { position: absolute; left: 3px; bottom: 4px; width: 0; border: 4px solid transparent; border-top: 5px solid #5a7a8a; border-bottom: none; }

.bottom-tabs {
  height: 20px;
  flex: none;
  display: flex;
  align-items: flex-end;
  background: #fff;
  box-sizing: border-box;
}
.bt {
  width: 45px;
  height: 20px;
  line-height: 20px;
  text-align: center;
  color: #333;
}
.bt.off {
  width: 47px;
  background: #a7abb0;
  border: 1px solid #777;
  border-bottom: none;
  box-sizing: border-box;
}
.h-scroll {
  flex: 1;
  height: 18px;
  margin-left: 410px;
  display: flex;
  align-items: center;
  padding: 0 18px 0 0;
  position: relative;
}
.arrow-left { width: 0; border: 4px solid transparent; border-right: 5px solid #5a7a8a; border-left: none; }
.h-thumb { width: 412px; height: 8px; background: #aaa; margin-left: 6px; }
.arrow-right { margin-left: auto; width: 0; border: 4px solid transparent; border-left: 5px solid #5a7a8a; border-right: none; }

.statusbar {
  height: 33px;
  flex: none;
  box-sizing: border-box;
  background: #eef0f2;
  border: 1px solid #aaa;
  border-width: 2px 1px 2px;
}

.taskbar {
  position: relative;
  z-index: 2;
  height: 60px;
  flex: none;
  display: flex;
  align-items: center;
  background: #d6dce5;
  padding-left: 28px;
  box-sizing: border-box;
}
.weather {
  width: 622px;
  flex: none;
  display: flex;
  align-items: center;
  gap: 10px;
  line-height: 20px;
}
.w-text { font-size: 14.5px; color: #333; }
.w-sub { font-size: 15px; color: #5a5f66; }
.start { flex: none; }
.search {
  width: 141px;
  height: 38px;
  margin-left: 19px;
  border-radius: 19px;
  background: #f1f3f7;
  display: flex;
  align-items: center;
  justify-content: center;
  gap: 5px;
  font-size: 15px;
  flex: none;
}
.apps {
  margin-left: 4px;
  display: flex;
  flex: none;
}
.app {
  position: relative;
  width: 55px;
  height: 52px;
  display: flex;
  align-items: center;
  justify-content: center;
}
.app.dot::after {
  content: "";
  position: absolute;
  left: 24px;
  bottom: 0;
  width: 7px;
  height: 3px;
  border-radius: 2px;
  background: #6c7079;
}
.app.active {
  background: #ecf0f5;
  border-radius: 5px;
  box-shadow: 4px 0 0 -1px #e4e8ee;
  width: 43px;
  margin-left: 6px;
}
.app.active::after {
  content: "";
  position: absolute;
  left: 14px;
  bottom: 1px;
  width: 20px;
  height: 4px;
  border-radius: 2px;
  background: #2b8a9c;
}
.tray {
  margin-left: auto;
  padding-right: 24px;
  display: flex;
  align-items: center;
}
.t30 { width: 30px; }
.ime { width: 38px; text-align: center; font-size: 17px; }
.wifi { width: 30px; margin-left: 7px; }
.vol { width: 26px; }
.bat { width: 26px; margin-left: 6px; }
.clock {
  width: 89px;
  text-align: right;
  font-size: 15px;
  line-height: 20px;
  color: #222;
}
.badge {
  width: 20px;
  height: 20px;
  margin-left: 9px;
  border-radius: 50%;
  background: #1f8a9c;
  color: #fff;
  font-size: 13px;
  line-height: 20px;
  text-align: center;
}

.dialog {
  position: absolute;
  left: 130px;
  top: 89px;
  width: 1661px;
  height: 881px;
  display: flex;
  flex-direction: column;
  border-radius: 8px;
  box-shadow: 0 10px 42px rgba(0, 0, 0, 0.5);
}
.dlg-title {
  height: 37px;
  flex: none;
  display: flex;
  align-items: center;
  padding-left: 8px;
  background: #fff;
  border: 1px solid #bbb;
  border-bottom: none;
  border-radius: 8px 8px 0 0;
  box-sizing: border-box;
}
.dlg-name {
  margin-left: 5px;
  font-size: 15.5px;
  color: #222;
  font-family: "Open Sans", "Liberation Sans", sans-serif;
}
.dlg-ctrl {
  margin-left: auto;
  width: 178px;
  display: flex;
  justify-content: space-around;
  transform: translate(1px, -1px);
}
.dlg-body {
  flex: 1;
  min-height: 0;
  display: flex;
  box-sizing: border-box;
  border: 1px solid #000;
  border-width: 1px 1.500px 1.500px;
  border-radius: 0 0 8px 8px;
  background: #f1f1f1;
}
.form {
  width: 498px;
  flex: none;
  box-sizing: border-box;
  padding: 56px 0 0 101px;
}
.field {
  width: 200px;
  margin-bottom: 24px;
}
.field-row {
  display: flex;
  align-items: center;
  gap: 7px;
  height: 24px;
}
.field-row label {
  font-size: 12px;
  color: #333;
  white-space: nowrap;
  margin-top: -2px;
}
.field-input {
  flex: 1;
  min-width: 0;
  height: 24px;
  box-sizing: border-box;
  border: 1px solid #a5a5a5;
  background: #fff;
  padding: 0 3px;
  font: 13px "DejaVu Sans Mono", "Liberation Mono", monospace;
  color: #222;
  outline: none;
}
.slider {
  position: relative;
  margin: 7px 4px 0;
  height: 10px;
}
.s-track {
  position: absolute;
  left: 0;
  right: 0;
  top: 4px;
  height: 2px;
  background: #adadad;
}
.s-fill {
  position: absolute;
  left: 0;
  top: 4px;
  height: 2px;
  background: #0f6cbd;
}
.s-handle {
  position: absolute;
  top: 0;
  width: 10px;
  height: 10px;
  margin-left: -5px;
  border-radius: 50%;
}
.f-btn {
  display: block;
  width: 65px;
  height: 20px;
  padding: 0;
  border: 1px solid #777;
  border-radius: 3px;
  background: linear-gradient(#f0f0f0 60%, #d8d8d8 60%);
  font: 14.500px "Noto Sans CJK SC", sans-serif;
  line-height: 18px;
  color: #222;
}
.b1 { margin: 40px 0 0 68px; }
.b2 { margin: 48px 0 0 74px; }
.b3 { margin: 47px 0 0 74px; }

.stage {
  width: 1002px;
  flex: none;
}
.form-tabs {
  height: 25px;
  display: flex;
  align-items: flex-end;
}
.f-tab {
  width: 54px;
  height: 22px;
  box-sizing: border-box;
  text-align: center;
  font: 12px/22px "Noto Sans CJK SC", sans-serif;
  color: #111;
}
.f-tab.sel {
  height: 24px;
  line-height: 24px;
  border: 1px solid #dcdcdc;
  border-bottom: none;
}
.frame {
  height: 693px;
  box-sizing: border-box;
  border: 1px solid #000;
  padding: 41px 0 0 101px;
  display: flex;
  flex-direction: column;
}
.toolbar {
  position: relative;
  height: 39px;
  flex: none;
  box-sizing: border-box;
  padding-bottom: 2px;
  border-top: 1px solid #fff;
  border-bottom: 1px solid #8c8c8c;
  display: grid;
  grid-template-columns: 38px 14px 38px 16px 38px 14px 46px 12px 24px 30px 47px 12px 52px 30px 6px 51px 79px 29px 48px 18px 39px 42px 41px 42px 38px 1fr 18px;
  align-items: center;
  justify-items: center;
  background: linear-gradient(90deg, #f0f0f0 642px, #f9fafb 642px);
  font-family: "Noto Sans CJK SC", sans-serif;
}
.toolbar::after {
  content: "";
  position: absolute;
  left: 642px;
  right: 0;
  bottom: -1px;
  height: 2px;
  background: #8a8a8a;
}
.sep {
  width: 1px;
  height: 26px;
  background: #d2d2d2;
}
.sep.tall {
  height: 37px;
  background: #c4c4c4;
}
.sep.tall.dark {
  background: #555;
}
.color-cube { margin-left: 4px; }
.axes { margin-left: 7px; }
.ax { font: 9px "Liberation Sans", sans-serif; fill: #222; }
.time-label {
  justify-self: start;
  font-size: 14px;
  margin-left: 1px;
  letter-spacing: 1px;
}
.combo {
  width: 79px;
  height: 21px;
  box-sizing: border-box;
  border: 1px solid #a0a0a0;
  background: #f4f4f4;
  display: flex;
  align-items: center;
  justify-content: space-between;
  padding: 0 6px 0 4px;
  font-size: 14px;
}
.spin {
  width: 48px;
  height: 23px;
  box-sizing: border-box;
  border: 1px solid #a0a0a0;
  background: #fff;
  display: flex;
  align-items: center;
  justify-content: space-between;
  padding: 0 6px 0 4px;
  font-size: 14px;
}
.viewport {
  position: relative;
  flex: 1;
  min-height: 0;
  background: linear-gradient(#bdd0e6, #e4e8ee);
  overflow: hidden;
}
.scene {
  display: block;
}
.tri-z, .tri-y, .tri-x {
  font: 700 12px "Liberation Sans", sans-serif;
}
.tri-z { fill: #0000ff; }
.tri-y { fill: #00ee00; }
.tri-x { fill: #ff0000; }
.legend {
  position: absolute;
  left: 800px;
  top: 327px;
  color: #222;
}
.lg-title {
  font-size: 15px;
  line-height: 16px;
  word-spacing: 1px;
}
.lg-body {
  display: flex;
  margin-top: 13px;
}
.lg-bar {
  width: 15px;
  height: 204px;
  background: linear-gradient(#ff0000, #ffff00 25%, #00ff00 50%, #00ffff 75%, #0000ff);
}
.lg-vals {
  height: 219px;
  margin: -10px 0 0 1px;
  display: flex;
  flex-direction: column;
  justify-content: space-between;
  font-size: 12.600px;
  line-height: 14px;
}
.v-colon {
  position: absolute;
  left: 447px;
  top: 587px;
  font-size: 13px;
  font-weight: 700;
  color: #111;
}
</style>
